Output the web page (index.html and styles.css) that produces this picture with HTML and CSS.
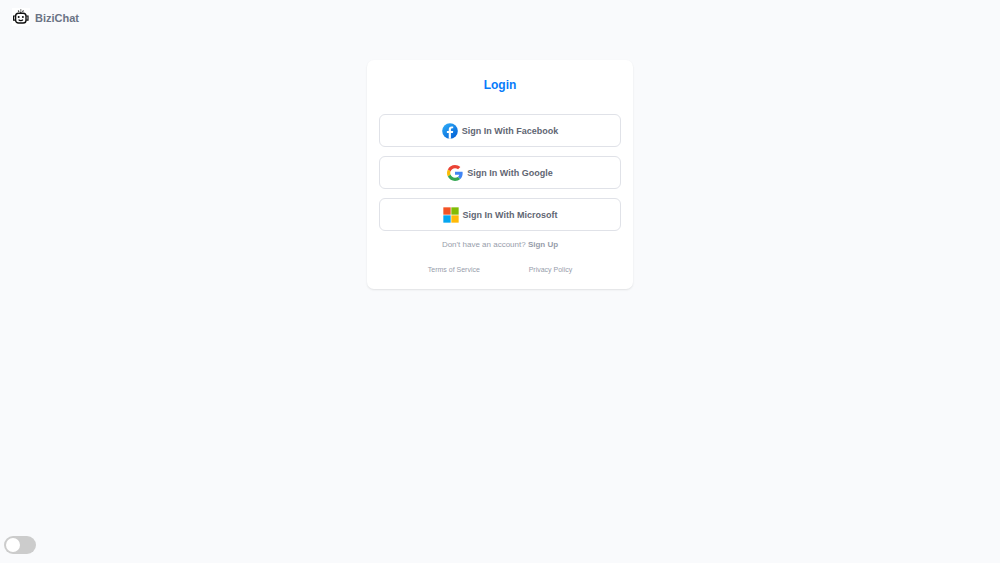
FILE: index.html
```html
<!DOCTYPE html>
<html lang="en">

<head>
    <meta charset="UTF-8">
    <meta name="viewport" content="width=device-width, initial-scale=1.0">
    <title>BiziChat - Login</title>
    <link rel="stylesheet" href="styles.css">
</head>

<body>
    <header>
        <a class="brand" href="#">
            <svg class="logo" viewBox="0 0 18 18" fill="none" stroke="#111" aria-hidden="true">
                <rect width="18" height="18" fill="#fff" stroke="none" />
                <rect x="3.6" y="5.2" width="10.4" height="9.8" rx="2.8" stroke-width="1.4" />
                <path d="M3.4 8H1.6V12.2H3.4M14.2 8H16V12.2H14.2" stroke-width="1.2" />
                <path d="M8.8 5V3.6M6 2.6l1.2 1M11.6 2.6l-1.2 1M8.8 1.6v1" stroke-width="1.1" />
                <path d="M6.6 11.6c1.1 1.3 3.3 1.3 4.4 0" stroke-width="1.1" />
                <circle cx="6.7" cy="9" r="1" fill="#111" stroke="none" />
                <circle cx="10.9" cy="9" r="1" fill="#111" stroke="none" />
            </svg>
            <span>BiziChat</span>
        </a>
    </header>

    <main>
        <div class="login-card">
            <h1>Login</h1>
            <div class="providers">
                <button type="button">
                    <svg viewBox="0 0 48 48" aria-hidden="true">
                        <linearGradient id="fb" x1="10" x2="38" y1="6" y2="42" gradientUnits="userSpaceOnUse">
                            <stop offset="0" stop-color="#2aa4f4" />
                            <stop offset="1" stop-color="#0766d8" />
                        </linearGradient>
                        <circle cx="24" cy="24" r="23.5" fill="url(#fb)" />
                        <path fill="#fff" d="M26.7 30h5.9l1-6h-6.9v-3.3c0-2.5.8-4.7 3.1-4.7h3.8v-5.2c-.7-.1-2-.3-4.7-.3-5.5 0-8.7 2.9-8.7 9.5v4h-5.6v6h5.6v17.2c1.1.2 2.2.3 3.4.3 1.1 0 2.1-.1 3.1-.2z" />
                    </svg>
                    Sign In With Facebook
                </button>
                <button type="button">
                    <svg viewBox="0 0 48 48" aria-hidden="true">
                        <path fill="#ea4335" d="M24 9.5c3.54 0 6.71 1.22 9.21 3.6l6.85-6.85C35.9 2.38 30.47 0 24 0 14.62 0 6.51 5.38 2.56 13.22l7.98 6.19C12.43 13.72 17.74 9.5 24 9.5z" />
                        <path fill="#4285f4" d="M46.98 24.55c0-1.57-.15-3.09-.38-4.55H24v9.02h12.94c-.58 2.96-2.26 5.48-4.78 7.18l7.73 6c4.51-4.18 7.09-10.36 7.09-17.65z" />
                        <path fill="#fbbc05" d="M10.53 28.59c-.48-1.45-.76-2.99-.76-4.59s.27-3.14.76-4.59l-7.98-6.19C.92 16.46 0 20.12 0 24c0 3.88.92 7.54 2.56 10.78l7.97-6.19z" />
                        <path fill="#34a853" d="M24 48c6.48 0 11.93-2.13 15.89-5.81l-7.73-6c-2.15 1.45-4.92 2.3-8.16 2.3-6.26 0-11.57-4.22-13.47-9.91l-7.98 6.19C6.51 42.62 14.62 48 24 48z" />
                    </svg>
                    Sign In With Google
                </button>
                <button type="button">
                    <svg viewBox="0 0 48 48" aria-hidden="true">
                        <path fill="#f35325" d="M1 1h22v22H1z" />
                        <path fill="#81bc06" d="M25 1h22v22H25z" />
                        <path fill="#05a6f0" d="M1 25h22v22H1z" />
                        <path fill="#ffba08" d="M25 25h22v22H25z" />
                    </svg>
                    Sign In With Microsoft
                </button>
            </div>
            <p class="signup">Don't have an account? <a href="#">Sign Up</a></p>
            <div class="legal">
                <a href="#">Terms of Service</a>
                <a href="#">Privacy Policy</a>
            </div>
        </div>
    </main>

    <label class="switch">
        <input type="checkbox" role="switch" aria-label="Dark mode">
        <span class="slider"></span>
    </label>
</body>

</html>
```
FILE: styles.css
```css
* {
    box-sizing: border-box;
}

body {
    display: flex;
    flex-direction: column;
    min-height: 100vh;
    margin: 0;
    background-color: #f9fafc;
    color: #6b7385;
    font-family: "Liberation Sans", Arial, sans-serif;
}

a {
    color: inherit;
    text-decoration: none;
}

header {
    display: flex;
    padding: 8px 12px;
}

.brand {
    display: flex;
    align-items: flex-start;
    gap: 5px;
    font-size: 11px;
    font-weight: bold;
    line-height: 20px;
}

.logo {
    width: 18px;
    height: 18px;
}

main {
    flex: 1;
    padding: 24px 16px;
}

.login-card {
    width: 100%;
    max-width: 266px;
    margin: 0 auto;
    padding: 16px 12px 12px;
    border-radius: 7px;
    background-color: #fff;
    box-shadow: 0 1px 2px rgba(0, 0, 0, 0.1);
}

h1 {
    margin: 0 0 20px;
    color: #087bfa;
    font-size: 12px;
    line-height: 18px;
    text-align: center;
}

.providers {
    display: flex;
    flex-direction: column;
    gap: 9px;
}

.providers button {
    display: flex;
    align-items: center;
    justify-content: center;
    gap: 4px;
    height: 33px;
    padding: 0;
    border: 1px solid #e0e2e8;
    border-radius: 6px;
    background-color: #fff;
    color: #5f6673;
    font-family: inherit;
    font-size: 9px;
    font-weight: bold;
    cursor: pointer;
}

.providers button:hover {
    background-color: #f9fafc;
}

.providers svg {
    width: 16px;
    height: 16px;
}

.signup {
    margin: 8px 0 12px;
    color: #979dab;
    font-size: 8px;
    line-height: 12px;
    text-align: center;
}

.signup a {
    font-weight: bold;
}

.legal {
    display: flex;
    justify-content: space-evenly;
    color: #979dab;
    font-size: 7px;
    line-height: 14px;
}

.switch {
    position: fixed;
    bottom: 9px;
    left: 4px;
    width: 32px;
    height: 18px;
}

.switch input {
    width: 100%;
    height: 100%;
    margin: 0;
    opacity: 0;
}

.slider {
    position: absolute;
    inset: 0;
    border-radius: 9px;
    background-color: #ccc;
    cursor: pointer;
}

.slider::before {
    content: "";
    position: absolute;
    top: 2px;
    left: 2px;
    width: 14px;
    height: 14px;
    border-radius: 50%;
    background-color: #fff;
    transition: transform 0.3s;
}

.switch input:checked + .slider {
    background-color: #087bfa;
}

.switch input:checked + .slider::before {
    transform: translateX(14px);
}
```
